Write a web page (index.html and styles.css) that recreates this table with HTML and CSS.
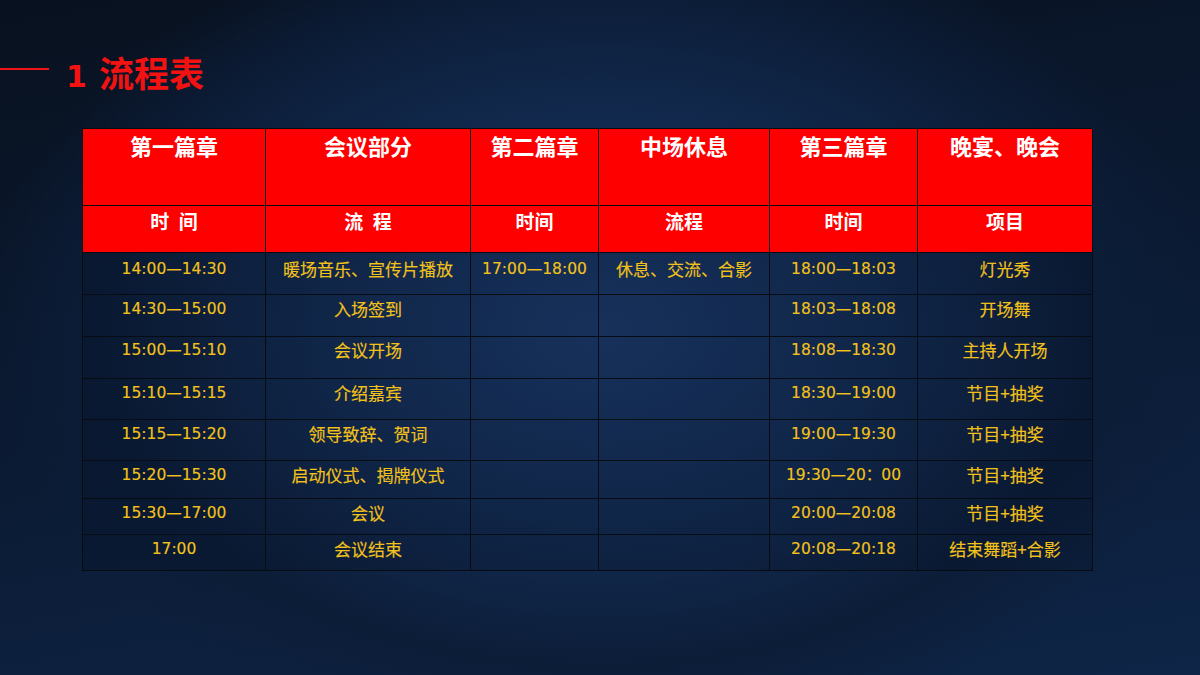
FILE: index.html
```html
<!DOCTYPE html>
<html lang="zh-CN">
<head>
<meta charset="utf-8">
<title>流程表</title>
<link rel="stylesheet" href="styles.css">
</head>
<body>
<div class="slide">
  <div class="title-row">
    <span class="title-line"></span>
    <h1 class="title"><span class="num">1</span>流程表</h1>
  </div>
  <table class="schedule">
    <colgroup>
      <col class="c1"><col class="c2"><col class="c3"><col class="c4"><col class="c5"><col class="c6">
    </colgroup>
    <thead>
      <tr class="h1">
        <th>第一篇章</th><th>会议部分</th><th>第二篇章</th><th>中场休息</th><th>第三篇章</th><th>晚宴、晚会</th>
      </tr>
      <tr class="h2">
        <th>时&ensp;间</th><th>流&ensp;程</th><th>时间</th><th>流程</th><th>时间</th><th>项目</th>
      </tr>
    </thead>
    <tbody>
      <tr class="r1"><td class="t">14:00—14:30</td><td>暖场音乐、宣传片播放</td><td class="t">17:00—18:00</td><td>休息、交流、合影</td><td class="t">18:00—18:03</td><td>灯光秀</td></tr>
      <tr class="r2"><td class="t">14:30—15:00</td><td>入场签到</td><td></td><td></td><td class="t">18:03—18:08</td><td>开场舞</td></tr>
      <tr class="r3"><td class="t">15:00—15:10</td><td>会议开场</td><td></td><td></td><td class="t">18:08—18:30</td><td>主持人开场</td></tr>
      <tr class="r4"><td class="t">15:10—15:15</td><td>介绍嘉宾</td><td></td><td></td><td class="t">18:30—19:00</td><td>节目+抽奖</td></tr>
      <tr class="r5"><td class="t">15:15—15:20</td><td>领导致辞、贺词</td><td></td><td></td><td class="t">19:00—19:30</td><td>节目+抽奖</td></tr>
      <tr class="r6"><td class="t">15:20—15:30</td><td>启动仪式、揭牌仪式</td><td></td><td></td><td class="t">19:30—20：00</td><td>节目+抽奖</td></tr>
      <tr class="r7"><td class="t">15:30—17:00</td><td>会议</td><td></td><td></td><td class="t">20:00—20:08</td><td>节目+抽奖</td></tr>
      <tr class="r8"><td class="t">17:00</td><td>会议结束</td><td></td><td></td><td class="t">20:08—20:18</td><td>结束舞蹈+合影</td></tr>
    </tbody>
  </table>
</div>
</body>
</html>
```
FILE: styles.css
```css
html, body {
  margin: 0;
  padding: 0;
}
body {
  width: 1200px;
  height: 675px;
  overflow: hidden;
  font-family: "DejaVu Sans", "Noto Sans CJK SC", sans-serif;
}
.slide {
  width: 1200px;
  height: 675px;
  box-sizing: border-box;
  padding-top: 50px;
  background:
    radial-gradient(ellipse 620px 420px at 600px 330px, #1b3a6a 0%, #132c52 45%, #0c1d38 80%, rgba(12,29,56,0) 100%),
    linear-gradient(170deg, #08111f 0%, #0b1a32 50%, #0e2547 100%);
}
.title-row {
  display: flex;
  align-items: center;
  height: 48px;
}
.title-line {
  display: block;
  width: 49px;
  height: 2px;
  background: #f01414;
  margin-right: 17px;
  margin-top: -10px;
}
.title {
  margin: 0;
  font-family: "Noto Sans CJK SC", sans-serif;
  font-weight: bold;
  font-size: 35px;
  line-height: 48px;
  color: #f21212;
  letter-spacing: 0;
}
.title .num {
  font-family: "DejaVu Sans", sans-serif;
  font-size: 30px;
  margin-right: 12px;
}
.schedule {
  margin: 30px 0 0 82px;
  width: 1011px;
  border-collapse: collapse;
  table-layout: fixed;
}
.c1 { width: 183px; }
.c2 { width: 205px; }
.c3 { width: 128px; }
.c4 { width: 171px; }
.c5 { width: 148px; }
.c6 { width: 175px; }
.schedule th,
.schedule td {
  border: 1px solid #070b12;
  text-align: center;
  vertical-align: top;
  padding: 0;
}
.schedule th {
  background: #ff0000;
  color: #ffffff;
  font-family: "Noto Sans CJK SC", sans-serif;
  font-weight: bold;
}
.h1 { height: 77px; }
.h1 th {
  font-size: 22px;
  line-height: 28px;
  padding-top: 2px;
}
.h2 { height: 47px; }
.h2 th {
  font-size: 19px;
  line-height: 24px;
  padding-top: 3px;
}
.schedule td {
  color: #f2c21a;
  font-family: "Noto Sans CJK SC", sans-serif;
  font-weight: normal;
  font-size: 17px;
  line-height: 22px;
  padding-top: 4px;
  -webkit-text-stroke: 0.15px #f2c21a;
  background: rgba(4, 12, 28, 0.18);
}
.schedule td.t {
  font-family: "DejaVu Sans", "Noto Sans CJK SC", sans-serif;
  font-size: 15.5px;
}
.r1 { height: 42px; }
.r1 td { padding-top: 5px; }
.r2 { height: 42px; }
.r2 td { padding-top: 3px; }
.r3 { height: 42px; }
.r3 td { padding-top: 2px; }
.r4 { height: 41px; }
.r4 td { padding-top: 3px; }
.r5 { height: 41px; }
.r5 td { padding-top: 3px; }
.r6 { height: 38px; }
.r6 td { padding-top: 3px; }
.r7 { height: 36px; }
.r7 td { padding-top: 3px; }
.r8 { height: 36px; }
.r8 td { padding-top: 3px; }
```
